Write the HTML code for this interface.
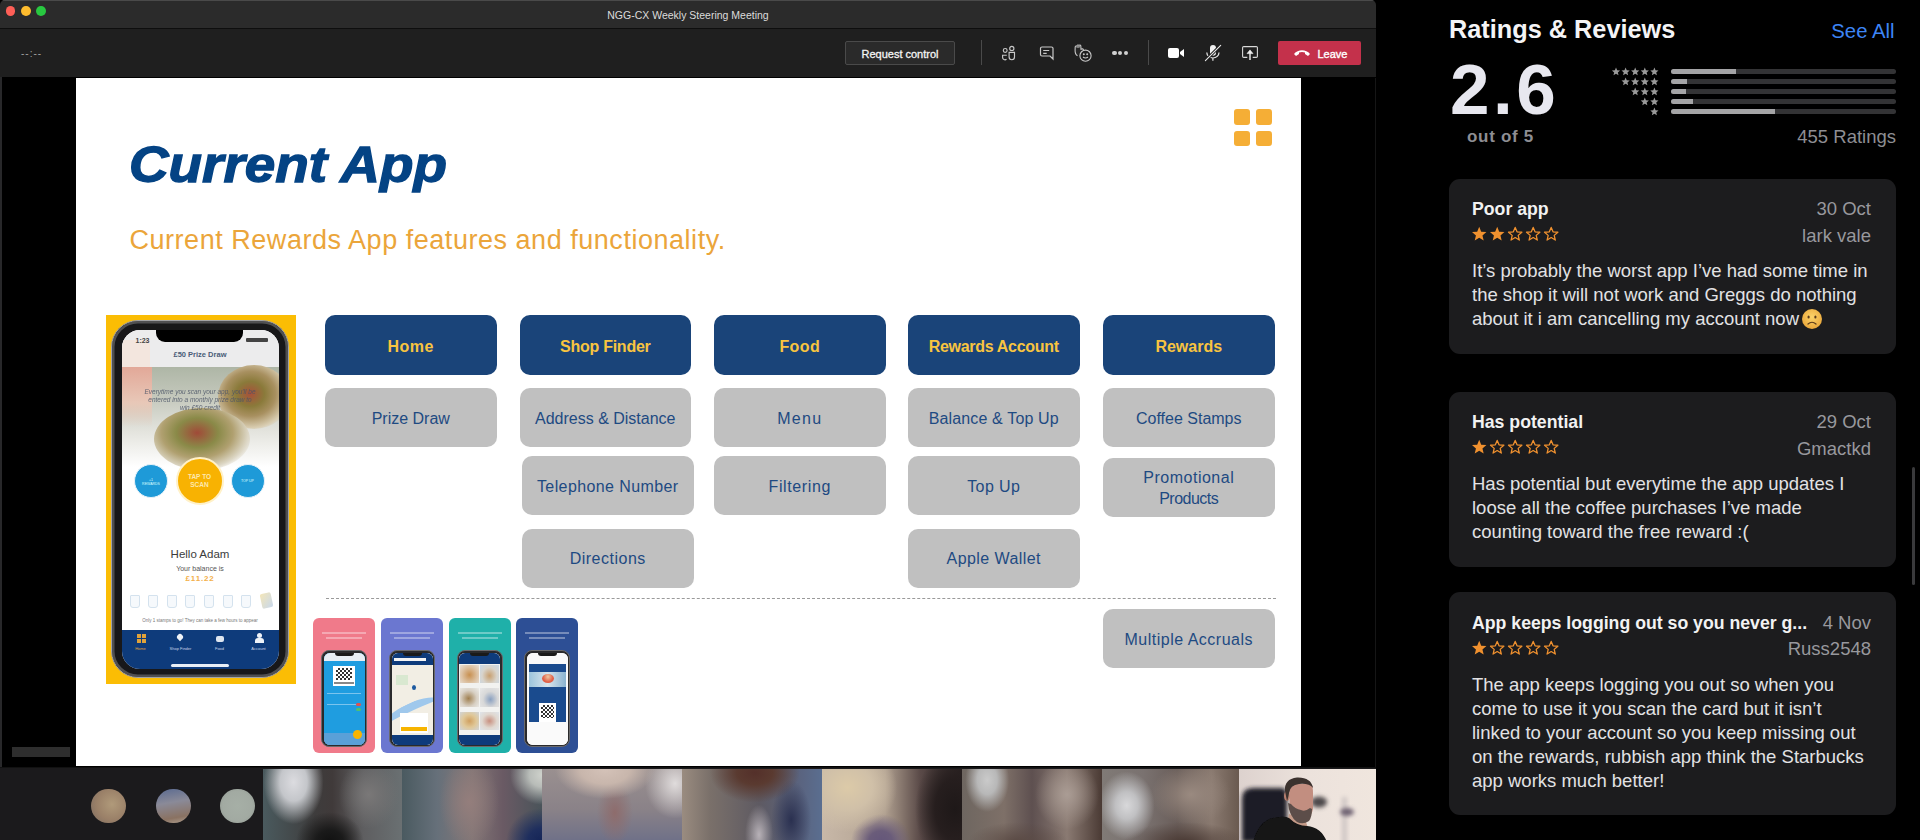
<!DOCTYPE html>
<html><head><meta charset="utf-8">
<style>
*{margin:0;padding:0;box-sizing:border-box}
html,body{width:1920px;height:840px;overflow:hidden;background:#000;font-family:"Liberation Sans",sans-serif}
.a{position:absolute}
#win{left:0;top:0;width:1376px;height:840px;background:#000;overflow:hidden;border-radius:5px 5px 0 0}
#titlebar{left:0;top:0;width:1376px;height:29px;background:#2b2b2b;border-top:1px solid #4a4a4a;border-bottom:1px solid #0e0e0e}
.tl{width:9.8px;height:9.8px;border-radius:50%;top:5.8px}
#title{left:0;top:8px;width:1376px;text-align:center;color:#dcdcdc;font-size:10.5px;line-height:14px}
#toolbar{left:0;top:29px;width:1376px;height:48px;background:#1f1f1f}
#slide{left:76px;top:78px;width:1225px;height:688px;background:#fff;overflow:hidden}
#strip{left:0;top:767px;width:1376px;height:73px;background:#1b1a1c;border-top:1px solid #111}
#right{left:1376px;top:0;width:544px;height:840px;background:#000}
.card{left:1449px;width:447px;background:#1c1c1e;border-radius:11px}
.btn{position:absolute;border-radius:10px;text-align:center;display:flex;align-items:center;justify-content:center;line-height:21px}
.pb{background:#1a4479;color:#f8c440;font-weight:bold;font-size:16px;height:59.5px;padding-top:4px}
.gb{background:#c0c0c0;color:#1e4a82;font-size:16px;height:59px;padding-top:1.5px}
.tbic{position:absolute}
</style></head>
<body>
<div id="win" class="a">
  <div id="titlebar" class="a"></div>
  <div class="a tl" style="left:5.5px;background:#fe5f57"></div>
  <div class="a tl" style="left:20.8px;background:#febc2e"></div>
  <div class="a tl" style="left:36.4px;background:#28c840"></div>
  <div id="title" class="a">NGG-CX Weekly Steering Meeting</div>
  <div id="toolbar" class="a">
    <div class="a" style="left:21px;top:18.5px;color:#a0a0a0;font-size:10px;letter-spacing:1px">--:--</div>
    <div class="a" style="left:845px;top:11.5px;width:110px;height:24.5px;background:#2a2a2a;border:1px solid #4a4a4a;border-radius:2px;color:#f4f4f4;font-size:11px;text-align:center;line-height:24px;-webkit-text-stroke:0.3px #f4f4f4">Request control</div>
    <div class="a" style="left:981px;top:11px;width:1px;height:25px;background:#4a4a4a"></div>
    <div class="a" style="left:1148px;top:11px;width:1px;height:25px;background:#4a4a4a"></div>
    <!-- people -->
    <svg class="a" style="left:1001px;top:16px" width="18" height="18" viewBox="0 0 18 18" fill="none" stroke="#c8c8c8" stroke-width="1.15">
      <circle cx="4.2" cy="5.4" r="1.9"/><circle cx="10.8" cy="3.4" r="2.1"/>
      <path d="M8.1 7.4 h5.4 v4.6 a2.7 2.7 0 0 1 -5.4 0 z"/><path d="M5.8 10.2 h-4.2 v2.2 a2.4 2.4 0 0 0 3.9 1.9"/>
    </svg>
    <!-- chat -->
    <svg class="a" style="left:1039px;top:17px" width="17" height="17" viewBox="0 0 17 17" fill="none" stroke="#c8c8c8" stroke-width="1.2">
      <path d="M3 1 h9.5 a1.5 1.5 0 0 1 1.5 1.5 v10.5 l-3 -3 h-8 a1.5 1.5 0 0 1 -1.5 -1.5 v-6 a1.5 1.5 0 0 1 1.5 -1.5z"/><path d="M4.2 4.5 h6 M4.2 7.3 h3.5"/>
    </svg>
    <!-- reactions -->
    <svg class="a" style="left:1073px;top:14px" width="20" height="20" viewBox="0 0 20 20" fill="none" stroke="#c8c8c8" stroke-width="1.1">
      <path d="M4.5 12.8 C2.8 11.8 2 9.5 2.1 7 L2.2 4 C2.3 3 3.6 2.8 3.9 3.8 L4.1 2.8 C4.4 1.8 5.7 1.9 5.9 2.9 L6.1 2.5 C6.5 1.6 7.7 1.9 7.8 2.9 L8 6.3 L9.2 5.9 C10 5.7 10.6 6.4 10.3 7.2" fill="#262626"/><ellipse cx="5" cy="3.6" rx="2.3" ry="1.4" fill="#888" stroke="none"/>
      <circle cx="12.5" cy="12.7" r="5.6" fill="#1f1f1f"/><path d="M10 14 q2.5 2 5 0"/><circle cx="10.8" cy="11.2" r="0.45"/><circle cx="14.2" cy="11.2" r="0.45"/>
    </svg>
    <!-- dots -->
    <div class="a" style="left:1112px;top:21.5px;width:4.5px;height:4.5px;border-radius:50%;background:#d0d0d0"></div>
    <div class="a" style="left:1117.8px;top:21.5px;width:4.5px;height:4.5px;border-radius:50%;background:#d0d0d0"></div>
    <div class="a" style="left:1123.6px;top:21.5px;width:4.5px;height:4.5px;border-radius:50%;background:#d0d0d0"></div>
    <!-- camera -->
    <svg class="a" style="left:1167px;top:17px" width="18" height="14" viewBox="0 0 18 14">
      <rect x="1" y="2" width="11" height="10" rx="2" fill="#fff"/><path d="M13 6 l4 -3 v8 l-4 -3z" fill="#fff"/>
    </svg>
    <!-- mic off -->
    <svg class="a" style="left:1203px;top:14px" width="20" height="20" viewBox="0 0 20 20" fill="none">
      <rect x="7" y="2" width="6" height="10.8" rx="3" fill="#f0f0f0"/>
      <path d="M3.8 9.4 a6.1 5.6 0 0 0 12.2 0 M9.9 15 v2.8" stroke="#e8e8e8" stroke-width="1.2"/>
      <path d="M2.4 17.6 L17.7 2.3" stroke="#1f1f1f" stroke-width="3"/>
      <path d="M2.4 17.6 L17.7 2.3" stroke="#e8e8e8" stroke-width="1.1" stroke-linecap="round"/>
    </svg>
    <!-- share -->
    <svg class="a" style="left:1241px;top:16px" width="18" height="17" viewBox="0 0 18 17" fill="none">
      <path d="M6.3 12.4 h-3.6 a1.1 1.1 0 0 1 -1.1 -1.1 v-8.6 a1.1 1.1 0 0 1 1.1 -1.1 h12.6 a1.1 1.1 0 0 1 1.1 1.1 v8.6 a1.1 1.1 0 0 1 -1.1 1.1 h-3.6" stroke="#d8d8d8" stroke-width="1.1"/>
      <path d="M9 7 v8" stroke="#f0f0f0" stroke-width="1.4"/>
      <path d="M6 8.6 L9 4.9 L12 8.6 Z" fill="#f0f0f0" stroke="#f0f0f0" stroke-width="0.6" stroke-linejoin="round"/>
    </svg>
    <!-- leave -->
    <div class="a" style="left:1278px;top:12px;width:83px;height:24px;background:#c4314b;border-radius:2px"></div>
    <svg class="a" style="left:1293px;top:19px" width="18" height="10" viewBox="0 0 18 10">
      <path d="M1 6 c4 -5 12 -5 16 0 l-2 2 l-3 -2 v-1.5 c-2 -0.8 -4 -0.8 -6 0 v1.5 l-3 2z" fill="#fff"/>
    </svg>
    <div class="a" style="left:1317.5px;top:17.5px;color:#fff;font-size:11px;line-height:14px;-webkit-text-stroke:0.35px #fff">Leave</div>
  </div>

  <div class="a" style="left:0;top:77px;width:2px;height:690px;background:#28282a"></div>
  <div id="slide" class="a">
    <!-- phone mockup -->
    <div class="a" style="left:30px;top:236.5px;width:190px;height:369px;background:#fbbd04"></div>
    <div class="a" style="left:34.5px;top:242px;width:178px;height:358px;border-radius:27px;background:#18181a;border:1.5px solid #a4a4a6;box-shadow:inset 0 0 0 2.5px #505052"></div>
    <div class="a" style="left:45.5px;top:251.5px;width:157px;height:339px;border-radius:18px;background:#fff;overflow:hidden">
      <div class="a" style="left:0;top:0;width:157px;height:38px;background:#ececed"></div>
      <div class="a" style="left:0;top:10px;width:28px;height:28px;background:#f3e6de"></div>
      <div class="a" style="left:14px;top:6px;font-size:7px;font-weight:bold;color:#444;line-height:9px">1:23</div>
      <div class="a" style="left:124px;top:8px;width:22px;height:4px;background:#444;border-radius:1px"></div>
      <div class="a" style="left:34.5px;top:0;width:87px;height:12.5px;background:#000;border-radius:0 0 9px 9px"></div>
      <div class="a" style="left:0;top:20px;width:157px;text-align:center;font-size:7.5px;font-weight:bold;color:#4a5c78;line-height:9px">£50 Prize Draw</div>
      <div class="a" style="left:0;top:37.5px;width:157px;height:100px;background:linear-gradient(180deg,#aeb6a6 0%,#c4c8bc 30%,#e4e4de 65%,#ffffff 100%)"></div>
      <div class="a" style="left:0;top:37.5px;width:30px;height:60px;background:linear-gradient(180deg,#e2a898,#e8c8b8 60%,rgba(240,230,220,0))"></div>
      <div class="a" style="left:96px;top:35px;width:72px;height:64px;border-radius:50%;background:radial-gradient(ellipse at 45% 45%,#a8503a 0%,#8a7a3a 25%,#a89060 45%,#d8ccb0 68%,rgba(220,215,205,0) 76%)"></div>
      <div class="a" style="left:32px;top:78px;width:96px;height:62px;border-radius:50%;background:radial-gradient(ellipse at 45% 40%,#a04a38 0%,#8a8a48 28%,#b0a070 48%,#dcd6c4 68%,rgba(230,228,220,0) 78%)"></div>
      <div class="a" style="left:2px;top:58px;width:153px;text-align:center;font-size:6.5px;font-style:italic;color:#4a5366;line-height:8px;opacity:.85">Everytime you scan your app, you'll be<br>entered into a monthly prize draw to<br>win £50 credit</div>
      <div class="a" style="left:12.5px;top:134.5px;width:34px;height:34px;border-radius:50%;background:#1e9ad8;border:1.5px solid #e6f1f9"></div>
      <div class="a" style="left:54px;top:127.5px;width:48px;height:48px;border-radius:50%;background:#f8b202;border:2px solid #fff1c8"></div>
      <div class="a" style="left:54px;top:143px;width:48px;text-align:center;font-size:6.5px;font-weight:bold;color:#fde8ae;line-height:8px">TAP TO<br>SCAN</div>
      <div class="a" style="left:109px;top:134.5px;width:34px;height:34px;border-radius:50%;background:#1e9ad8;border:1.5px solid #e6f1f9"></div>
      <div class="a" style="left:12.5px;top:148px;width:34px;text-align:center;font-size:3.5px;color:#dff;line-height:4px">+1<br>REWARDS</div>
      <div class="a" style="left:109px;top:149.5px;width:34px;text-align:center;font-size:3.5px;color:#dff;line-height:4px">TOP UP</div>
      <div class="a" style="left:0;top:217.5px;width:157px;text-align:center;font-size:11.5px;color:#3c3c3c;line-height:14px">Hello Adam</div>
      <div class="a" style="left:0;top:234px;width:157px;text-align:center;font-size:7px;color:#555;line-height:9px">Your balance is</div>
      <div class="a" style="left:0;top:244.5px;width:157px;text-align:center;font-size:8px;font-weight:bold;color:#f3b04a;line-height:9px;letter-spacing:0.8px">£11.22</div>
      <div class="a" style="left:8.0px;top:265px;width:10px;height:13px;border:1px solid #d4e2ee;border-radius:1px 1px 3px 3px;background:#f6f9fc"></div><div class="a" style="left:26.6px;top:265px;width:10px;height:13px;border:1px solid #d4e2ee;border-radius:1px 1px 3px 3px;background:#f6f9fc"></div><div class="a" style="left:45.2px;top:265px;width:10px;height:13px;border:1px solid #d4e2ee;border-radius:1px 1px 3px 3px;background:#f6f9fc"></div><div class="a" style="left:63.8px;top:265px;width:10px;height:13px;border:1px solid #d4e2ee;border-radius:1px 1px 3px 3px;background:#f6f9fc"></div><div class="a" style="left:82.4px;top:265px;width:10px;height:13px;border:1px solid #d4e2ee;border-radius:1px 1px 3px 3px;background:#f6f9fc"></div><div class="a" style="left:101.0px;top:265px;width:10px;height:13px;border:1px solid #d4e2ee;border-radius:1px 1px 3px 3px;background:#f6f9fc"></div><div class="a" style="left:119.6px;top:265px;width:10px;height:13px;border:1px solid #d4e2ee;border-radius:1px 1px 3px 3px;background:#f6f9fc"></div><div class="a" style="left:139px;top:263px;width:11px;height:15px;background:linear-gradient(135deg,#f4e6b8,#c8d8ec);border-radius:2px;transform:rotate(-12deg)"></div>
      <div class="a" style="left:0;top:288px;width:157px;text-align:center;font-size:4.5px;color:#777;line-height:6px;white-space:nowrap">Only 1 stamps to go! They can take a few hours to appear</div>
      <div class="a" style="left:0;top:300.5px;width:157px;height:39px;background:#0e3b7b"></div>
      <div class="a" style="left:15px;top:304px;width:4px;height:4px;background:#e0a23a"></div><div class="a" style="left:20px;top:304px;width:4px;height:4px;background:#e0a23a"></div>
      <div class="a" style="left:15px;top:309px;width:4px;height:4px;background:#e0a23a"></div><div class="a" style="left:20px;top:309px;width:4px;height:4px;background:#e0a23a"></div>
      <div class="a" style="left:55px;top:304px;width:6px;height:6px;background:#eef2f8;border-radius:50% 50% 50% 0;transform:rotate(-45deg)"></div>
      <div class="a" style="left:94px;top:306px;width:8px;height:6px;background:#dfe6f0;border-radius:2px"></div>
      <div class="a" style="left:135px;top:303px;width:5px;height:5px;background:#eef2f8;border-radius:50%"></div><div class="a" style="left:133px;top:308.5px;width:9px;height:4.5px;background:#eef2f8;border-radius:3px 3px 0 0"></div>
      <div class="a" style="left:4px;top:316px;width:30px;text-align:center;font-size:4px;color:#e0a23a;line-height:5px">Home</div>
      <div class="a" style="left:40px;top:316px;width:38px;text-align:center;font-size:4px;color:#c8d4e8;line-height:5px">Shop Finder</div>
      <div class="a" style="left:83px;top:316px;width:30px;text-align:center;font-size:4px;color:#c8d4e8;line-height:5px">Food</div>
      <div class="a" style="left:122px;top:316px;width:30px;text-align:center;font-size:4px;color:#c8d4e8;line-height:5px">Account</div>
      <div class="a" style="left:49.5px;top:334.5px;width:58px;height:2.5px;background:#e8eef6;border-radius:2px"></div>
    </div>

    <div class="a" style="left:237px;top:540px;width:62px;height:135px;border-radius:6px;background:#f07a8a;overflow:hidden">
      <div class="a" style="left:9px;top:14px;width:44px;height:1.5px;background:#ffffff;opacity:.35"></div>
      <div class="a" style="left:13px;top:19px;width:36px;height:1.5px;background:#ffffff;opacity:.35"></div>
      <div class="a" style="left:8px;top:32px;width:46px;height:97px;border-radius:8px;background:#2a2a2c;border:1px solid #6a6a6c"></div>
      <div class="a" style="left:10.5px;top:34.5px;width:41px;height:92px;border-radius:6px;overflow:hidden;background:#fff"><div class="a" style="left:0;top:0;width:41px;height:92px;background:#1f9de0"></div>
<div class="a" style="left:0;top:0;width:41px;height:8px;background:#e8eef4"></div>
<div class="a" style="left:9px;top:13px;width:22px;height:20px;background:#fff"></div>
<div class="a" style="left:12px;top:15px;width:16px;height:12px;background:repeating-conic-gradient(#333 0 25%,#fff 0 50%) 0 0/4px 4px"></div><div class="a" style="left:10px;top:29px;width:20px;height:2px;background:#888"></div>
<div class="a" style="left:3px;top:40px;width:34px;height:1px;background:#7ac4ee"></div>
<div class="a" style="left:3px;top:51px;width:34px;height:1px;background:#7ac4ee"></div>
<div class="a" style="left:32px;top:50px;width:5px;height:3px;background:#e05050;border-radius:2px"></div>
<div class="a" style="left:32px;top:55px;width:5px;height:3px;background:#50c070;border-radius:2px"></div>
<div class="a" style="left:0;top:80px;width:41px;height:12px;background:#5aa0d8"></div>
<div class="a" style="left:29px;top:77px;width:9px;height:9px;border-radius:50%;background:#f8b400"></div>
        <div class="a" style="left:11px;top:0;width:19px;height:3.5px;background:#1a1a1a;border-radius:0 0 3px 3px"></div>
      </div>
    </div>
    <div class="a" style="left:305px;top:540px;width:62px;height:135px;border-radius:6px;background:#6b77d0;overflow:hidden">
      <div class="a" style="left:9px;top:14px;width:44px;height:1.5px;background:#ffffff;opacity:.35"></div>
      <div class="a" style="left:13px;top:19px;width:36px;height:1.5px;background:#ffffff;opacity:.35"></div>
      <div class="a" style="left:8px;top:32px;width:46px;height:97px;border-radius:8px;background:#2a2a2c;border:1px solid #6a6a6c"></div>
      <div class="a" style="left:10.5px;top:34.5px;width:41px;height:92px;border-radius:6px;overflow:hidden;background:#fff"><div class="a" style="left:0;top:0;width:41px;height:92px;background:#f2eee4"></div>
<div class="a" style="left:0;top:0;width:41px;height:12px;background:#0e3b7b"></div>
<div class="a" style="left:2px;top:5px;width:32px;height:3px;background:#f4f4f4"></div>
<div class="a" style="left:-10px;top:50px;width:60px;height:20px;border-radius:50%;border-top:8px solid #9fc8ec;transform:rotate(-25deg)"></div>
<div class="a" style="left:4px;top:22px;width:12px;height:10px;background:#cfe6c8;opacity:.7"></div>
<div class="a" style="left:20px;top:32px;width:4px;height:5px;background:#1e5aa0;border-radius:50%"></div>
<div class="a" style="left:8px;top:60px;width:28px;height:20px;background:#fff"></div>
<div class="a" style="left:9px;top:74px;width:26px;height:4px;background:#f7b400"></div>
<div class="a" style="left:0;top:82px;width:41px;height:10px;background:#0e3b7b"></div>
        <div class="a" style="left:11px;top:0;width:19px;height:3.5px;background:#1a1a1a;border-radius:0 0 3px 3px"></div>
      </div>
    </div>
    <div class="a" style="left:372.5px;top:540px;width:62px;height:135px;border-radius:6px;background:#1fb0a9;overflow:hidden">
      <div class="a" style="left:9px;top:14px;width:44px;height:1.5px;background:#ffffff;opacity:.35"></div>
      <div class="a" style="left:13px;top:19px;width:36px;height:1.5px;background:#ffffff;opacity:.35"></div>
      <div class="a" style="left:8px;top:32px;width:46px;height:97px;border-radius:8px;background:#2a2a2c;border:1px solid #6a6a6c"></div>
      <div class="a" style="left:10.5px;top:34.5px;width:41px;height:92px;border-radius:6px;overflow:hidden;background:#fff"><div class="a" style="left:0;top:0;width:41px;height:92px;background:#f2f2f0"></div>
<div class="a" style="left:0;top:0;width:41px;height:11px;background:#0e3b7b"></div>
<div class="a" style="left:1px;top:12px;width:19px;height:18px;background:radial-gradient(ellipse at 50% 55%,#c89050 0%,#dcc0a0 55%,#e8e0d8 100%)"></div>
<div class="a" style="left:21px;top:12px;width:19px;height:18px;background:radial-gradient(ellipse at 50% 60%,#c8a070 0%,#d8d4cc 55%,#c8d8e8 100%)"></div>
<div class="a" style="left:1px;top:35px;width:19px;height:19px;background:radial-gradient(ellipse at 45% 55%,#a08050 0%,#d8d0c4 55%,#ececea 100%)"></div>
<div class="a" style="left:21px;top:35px;width:19px;height:19px;background:radial-gradient(ellipse at 55% 60%,#8aa0c0 0%,#d8d8d8 50%,#e8e8e8 100%)"></div>
<div class="a" style="left:1px;top:59px;width:19px;height:18px;background:radial-gradient(ellipse at 50% 50%,#d0a060 0%,#e0c898 50%,#d0d4d8 100%)"></div>
<div class="a" style="left:21px;top:59px;width:19px;height:18px;background:radial-gradient(ellipse at 50% 50%,#c89080 0%,#e0d8d0 55%,#dfe4ea 100%)"></div>
<div class="a" style="left:0;top:82px;width:41px;height:10px;background:#0e3b7b"></div>
        <div class="a" style="left:11px;top:0;width:19px;height:3.5px;background:#1a1a1a;border-radius:0 0 3px 3px"></div>
      </div>
    </div>
    <div class="a" style="left:440px;top:540px;width:62px;height:135px;border-radius:6px;background:#2d4f95;overflow:hidden">
      <div class="a" style="left:9px;top:14px;width:44px;height:1.5px;background:#ffffff;opacity:.35"></div>
      <div class="a" style="left:13px;top:19px;width:36px;height:1.5px;background:#ffffff;opacity:.35"></div>
      <div class="a" style="left:8px;top:32px;width:46px;height:97px;border-radius:8px;background:#2a2a2c;border:1px solid #6a6a6c"></div>
      <div class="a" style="left:10.5px;top:34.5px;width:41px;height:92px;border-radius:6px;overflow:hidden;background:#fff"><div class="a" style="left:0;top:0;width:41px;height:92px;background:#fafafa"></div>
<div class="a" style="left:2px;top:11px;width:37px;height:58px;background:#1a4b8e"></div>
<div class="a" style="left:2px;top:19px;width:37px;height:15px;background:linear-gradient(90deg,#9cc4dc,#d8e4ec,#8ab4d0)"></div>
<div class="a" style="left:15px;top:21px;width:12px;height:9px;border-radius:50%;background:radial-gradient(ellipse at 50% 30%,#f0c8a0 0%,#e06048 60%)"></div>
<div class="a" style="left:12px;top:50px;width:17px;height:19px;background:#fff"></div>
<div class="a" style="left:14px;top:52px;width:13px;height:13px;background:repeating-conic-gradient(#333 0 25%,#fff 0 50%) 0 0/4px 4px"></div>
        <div class="a" style="left:11px;top:0;width:19px;height:3.5px;background:#1a1a1a;border-radius:0 0 3px 3px"></div>
      </div>
    </div>
    <div class="a" style="left:1158px;top:31px;width:15.5px;height:15.5px;border-radius:3px;background:#f5ae36"></div>
    <div class="a" style="left:1180px;top:31px;width:15.5px;height:15.5px;border-radius:3px;background:#f5ae36"></div>
    <div class="a" style="left:1158px;top:52.5px;width:15.5px;height:15.5px;border-radius:3px;background:#f5ae36"></div>
    <div class="a" style="left:1180px;top:52.5px;width:15.5px;height:15.5px;border-radius:3px;background:#f5ae36"></div>
    <div class="a" id="ttl" style="left:52.5px;top:57px;line-height:60px;font-size:50px;font-weight:bold;font-style:italic;color:#044384;white-space:nowrap;transform-origin:0 0;transform:scaleX(1.097);-webkit-text-stroke:1.3px #044384">Current App</div>
    <div class="a" id="sub" style="left:53.5px;top:147.2px;line-height:30px;font-size:27px;color:#eba53a;white-space:nowrap;letter-spacing:0.53px">Current Rewards App features and functionality.</div>

    <div class="btn pb" style="letter-spacing:0.5px;left:249px;top:237px;width:171.5px">Home</div>
    <div class="btn pb" style="letter-spacing:-0.25px;left:443.5px;top:237px;width:171.5px">Shop Finder</div>
    <div class="btn pb" style="letter-spacing:0.4px;left:638px;top:237px;width:171.5px">Food</div>
    <div class="btn pb" style="letter-spacing:-0.3px;left:832px;top:237px;width:171.5px">Rewards Account</div>
    <div class="btn pb" style="left:1027px;top:237px;width:171.5px">Rewards</div>

    <div class="btn gb" style="left:249px;top:310px;width:171.5px">Prize Draw</div>
    <div class="btn gb" style="left:443.5px;top:310px;width:171.5px">Address &amp; Distance</div>
    <div class="btn gb" style="letter-spacing:1.3px;left:638px;top:310px;width:171.5px">Menu</div>
    <div class="btn gb" style="letter-spacing:0.15px;left:832px;top:310px;width:171.5px">Balance &amp; Top Up</div>
    <div class="btn gb" style="left:1027px;top:310px;width:171.5px">Coffee Stamps</div>

    <div class="btn gb" style="letter-spacing:0.4px;left:446px;top:378px;width:171.5px">Telephone Number</div>
    <div class="btn gb" style="letter-spacing:0.6px;left:638px;top:378px;width:171.5px">Filtering</div>
    <div class="btn gb" style="letter-spacing:0.4px;left:832px;top:378px;width:171.5px">Top Up</div>
    <div class="btn gb" style="left:1027px;top:379.5px;width:171.5px;line-height:21.1px;padding-top:2px"><div><span style="letter-spacing:0.5px">Promotional</span><br><span style="letter-spacing:-0.5px">Products</span></div></div>

    <div class="btn gb" style="letter-spacing:0.5px;left:446px;top:450.5px;width:171.5px">Directions</div>
    <div class="btn gb" style="letter-spacing:0.43px;left:832px;top:450.5px;width:171.5px">Apple Wallet</div>

    <div class="a" style="left:250px;top:520px;width:950px;height:0;border-top:1px dashed #9a9a9a"></div>
    <div class="btn gb" style="letter-spacing:0.5px;left:1027px;top:531px;width:171.5px">Multiple Accruals</div>
  </div>

  <div class="a" style="left:12px;top:747px;width:58px;height:10px;background:#2e2e2e;filter:blur(0.5px)"></div>
  <div class="a" style="left:1375px;top:78px;width:1px;height:689px;background:#161616"></div>
  <div id="strip" class="a">
    <div class="a" style="left:0;top:0;width:76px;height:0"></div>
    <div class="a" style="left:91.4px;top:20.6px;width:34.8px;height:34.8px;border-radius:50%;background:radial-gradient(circle at 60% 45%,#b09a7a 0%,#9a8068 55%,#7a6a60 100%)"></div>
    <div class="a" style="left:156.4px;top:20.6px;width:34.8px;height:34.8px;border-radius:50%;background:linear-gradient(170deg,#5a6a90 0%,#8a8a98 40%,#8a7262 80%,#b0a090 100%)"></div>
    <div class="a" style="left:220.2px;top:20.6px;width:34.8px;height:34.8px;border-radius:50%;background:radial-gradient(circle at 50% 50%,#a6afa6 0%,#a2aaa2 60%,#8a928a 100%)"></div>
    <div class="a" style="left:263px;top:1px;width:139px;height:73px;background:radial-gradient(ellipse 30px 42px at 22% 18%,#dcdce0 0%,#c4c6ca 45%,rgba(150,155,160,0) 100%),radial-gradient(ellipse 34px 30px at 48% 100%,#111 0%,#1a1a1a 40%,rgba(20,20,20,0) 100%),radial-gradient(ellipse 30px 34px at 76% 35%,#7a7878 0%,rgba(110,108,108,0) 100%),linear-gradient(90deg,#4a5a5e 0%,#3e3c3c 38%,#403a3a 50%,#5e5e60 72%,#6a7072 100%)"></div>
    <div class="a" style="left:402px;top:1px;width:140px;height:73px;background:radial-gradient(ellipse 32px 30px at 100% 8%,#cfd2cc 0%,#b8bcb8 40%,rgba(160,165,160,0) 100%),radial-gradient(ellipse 36px 34px at 100% 100%,#142456 0%,#1e2e5e 40%,rgba(40,50,90,0) 100%),radial-gradient(ellipse 30px 45px at 48% 45%,#947e7c 0%,rgba(140,120,118,0) 100%),linear-gradient(90deg,#4a5a60 0%,#66707a 25%,#827676 50%,#6a5a64 72%,#4a545a 100%)"></div>
    <div class="a" style="left:542px;top:1px;width:140px;height:73px;background:radial-gradient(ellipse 50px 30px at 45% 0%,#d4c2b8 0%,#c8b6ac 50%,rgba(190,175,168,0) 100%),radial-gradient(ellipse 30px 35px at 95% 20%,#e0dcdc 0%,rgba(215,210,210,0) 100%),radial-gradient(ellipse 18px 32px at 52% 60%,#8e6c6c 0%,rgba(140,110,110,0) 100%),linear-gradient(180deg,#9a9090 0%,#8a8288 55%,#6e7088 100%),linear-gradient(90deg,#5a6670,rgba(90,102,112,0))"></div>
    <div class="a" style="left:682px;top:1px;width:140px;height:73px;background:radial-gradient(ellipse 45px 30px at 52% 5%,#54302a 0%,#5a3a30 40%,rgba(90,60,50,0) 100%),radial-gradient(ellipse 14px 30px at 55% 90%,#b8b2b8 0%,rgba(180,175,180,0) 100%),radial-gradient(ellipse 20px 40px at 78% 70%,#2a3050 0%,rgba(40,45,80,0) 100%),linear-gradient(90deg,#9a8c80 0%,#7a706a 20%,#5e5a62 55%,#5a6480 85%,#5a6e90 100%)"></div>
    <div class="a" style="left:822px;top:1px;width:140px;height:73px;background:radial-gradient(ellipse 50px 45px at 18% 25%,#dccaa8 0%,#d0c0a8 50%,rgba(200,185,165,0) 100%),radial-gradient(ellipse 30px 28px at 42% 100%,#64567a 0%,#6a5c7a 40%,rgba(100,90,120,0) 100%),radial-gradient(ellipse 40px 60px at 95% 55%,#1e1818 0%,#261e1e 50%,rgba(40,30,30,0) 100%),linear-gradient(90deg,#c8b8a8 0%,#b0a090 45%,#5a4a48 70%,#2a2222 100%)"></div>
    <div class="a" style="left:962px;top:1px;width:140px;height:73px;background:radial-gradient(ellipse 22px 32px at 18% 15%,#cacaca 0%,#b8b8b8 45%,rgba(170,170,170,0) 100%),radial-gradient(ellipse 32px 35px at 75% 35%,#aa9c94 0%,rgba(160,145,138,0) 100%),radial-gradient(ellipse 50px 20px at 40% 100%,#5a4a44 0%,rgba(80,70,65,0) 100%),linear-gradient(90deg,#6e6660 0%,#7e7068 30%,#5e5050 50%,#8a7a72 75%,#4a3a34 100%)"></div>
    <div class="a" style="left:1102px;top:1px;width:137px;height:73px;background:radial-gradient(ellipse 28px 34px at 18% 50%,#d8d8da 0%,#c0c0c2 40%,rgba(160,160,160,0) 100%),radial-gradient(ellipse 40px 30px at 65% 35%,#9a8a80 0%,rgba(150,135,125,0) 100%),radial-gradient(ellipse 60px 20px at 60% 100%,#4a3a34 0%,rgba(70,55,50,0) 100%),linear-gradient(90deg,#807a76 0%,#7a7270 30%,#6a5e5a 55%,#8a7a70 80%,#6a5a50 100%)"></div>
    <svg class="a" style="left:1239px;top:1px" width="137" height="73" viewBox="0 0 137 73">
      <defs>
        <filter id="b2" x="-50%" y="-50%" width="200%" height="200%"><feGaussianBlur stdDeviation="2"/></filter>
        <filter id="b1" x="-50%" y="-50%" width="200%" height="200%"><feGaussianBlur stdDeviation="0.7"/></filter>
        <linearGradient id="pbg" x1="0" y1="0" x2="1" y2="0"><stop offset="0" stop-color="#ddd2ce"/><stop offset="0.5" stop-color="#ece2dc"/><stop offset="1" stop-color="#f0e6de"/></linearGradient>
      </defs>
      <rect width="137" height="73" fill="url(#pbg)"/>
      <rect x="103" y="28" width="5" height="50" fill="#cfc6c4" filter="url(#b2)"/>
      <ellipse cx="80" cy="33" rx="8" ry="5.5" fill="#4e484c" filter="url(#b2)"/>
      <ellipse cx="108" cy="43" rx="7" ry="4" fill="#6e6272" filter="url(#b2)"/>
      <path d="M3 73 V30 Q3 19 15 19 H44 Q48 20 48 28 V73 Z" fill="#1d1d26" filter="url(#b2)"/>
      <g filter="url(#b1)">
        <path d="M47 62 L50 45 L66 50 L70 62 Z" fill="#c49a88"/>
        <ellipse cx="48" cy="27" rx="3" ry="5" fill="#b88070"/>
        <path d="M50 18 Q50 15 56 15 H72 Q74 17 74 24 V40 Q73 47 66 49 Q56 50 51 43 Z" fill="#c28e80"/>
        <path d="M49 34 Q50 47 58 53 Q64 56 70 52 Q73 48 73 40 L71 39 Q66 43 62 41 Q56 40 52 35 Z" fill="#5c4e48"/>
        <path d="M46 22 Q45 10 58 8.5 Q72 8 74 19 Q70 14 60 15 Q51 16 50 24 Q49 30 48 32 Z" fill="#3a302e"/>
        <path d="M14 73 Q18 56 30 50 Q44 46 50 49 Q58 57 68 57 Q82 58 88 73 Z" fill="#121212"/>
      </g>
    </svg>
  </div>
</div>

<div id="right" class="a"></div>
  <div class="a" style="left:1449px;top:14.2px;line-height:30px;font-size:25.3px;font-weight:bold;color:#f4f4f6;white-space:nowrap">Ratings &amp; Reviews</div>
  <div class="a" style="right:25.5px;top:16px;line-height:30px;font-size:20.3px;color:#3d85f5;white-space:nowrap">See All</div>
  <div class="a" style="left:1450px;top:50.4px;line-height:80px;font-size:71px;font-weight:bold;color:#e7e7ef;white-space:nowrap;letter-spacing:3.5px">2.6</div>
  <div class="a" style="left:1467px;top:127px;line-height:20px;font-size:17px;font-weight:bold;color:#8e8e93;white-space:nowrap;letter-spacing:0.7px">out of 5</div>
  <svg class="a" style="left:1605px;top:62px" width="60" height="56" viewBox="0 0 60 56"><polygon points="49.40,5.50 50.54,8.23 53.49,8.47 51.24,10.40 51.93,13.28 49.40,11.74 46.87,13.28 47.56,10.40 45.31,8.47 48.26,8.23" fill="#9a9a9a"/><polygon points="39.80,5.50 40.94,8.23 43.89,8.47 41.64,10.40 42.33,13.28 39.80,11.74 37.27,13.28 37.96,10.40 35.71,8.47 38.66,8.23" fill="#9a9a9a"/><polygon points="30.20,5.50 31.34,8.23 34.29,8.47 32.04,10.40 32.73,13.28 30.20,11.74 27.67,13.28 28.36,10.40 26.11,8.47 29.06,8.23" fill="#9a9a9a"/><polygon points="20.60,5.50 21.74,8.23 24.69,8.47 22.44,10.40 23.13,13.28 20.60,11.74 18.07,13.28 18.76,10.40 16.51,8.47 19.46,8.23" fill="#9a9a9a"/><polygon points="11.00,5.50 12.14,8.23 15.09,8.47 12.84,10.40 13.53,13.28 11.00,11.74 8.47,13.28 9.16,10.40 6.91,8.47 9.86,8.23" fill="#9a9a9a"/><polygon points="49.40,15.50 50.54,18.23 53.49,18.47 51.24,20.40 51.93,23.28 49.40,21.73 46.87,23.28 47.56,20.40 45.31,18.47 48.26,18.23" fill="#9a9a9a"/><polygon points="39.80,15.50 40.94,18.23 43.89,18.47 41.64,20.40 42.33,23.28 39.80,21.73 37.27,23.28 37.96,20.40 35.71,18.47 38.66,18.23" fill="#9a9a9a"/><polygon points="30.20,15.50 31.34,18.23 34.29,18.47 32.04,20.40 32.73,23.28 30.20,21.73 27.67,23.28 28.36,20.40 26.11,18.47 29.06,18.23" fill="#9a9a9a"/><polygon points="20.60,15.50 21.74,18.23 24.69,18.47 22.44,20.40 23.13,23.28 20.60,21.73 18.07,23.28 18.76,20.40 16.51,18.47 19.46,18.23" fill="#9a9a9a"/><polygon points="49.40,25.50 50.54,28.23 53.49,28.47 51.24,30.40 51.93,33.28 49.40,31.73 46.87,33.28 47.56,30.40 45.31,28.47 48.26,28.23" fill="#9a9a9a"/><polygon points="39.80,25.50 40.94,28.23 43.89,28.47 41.64,30.40 42.33,33.28 39.80,31.73 37.27,33.28 37.96,30.40 35.71,28.47 38.66,28.23" fill="#9a9a9a"/><polygon points="30.20,25.50 31.34,28.23 34.29,28.47 32.04,30.40 32.73,33.28 30.20,31.73 27.67,33.28 28.36,30.40 26.11,28.47 29.06,28.23" fill="#9a9a9a"/><polygon points="49.40,35.50 50.54,38.23 53.49,38.47 51.24,40.40 51.93,43.28 49.40,41.73 46.87,43.28 47.56,40.40 45.31,38.47 48.26,38.23" fill="#9a9a9a"/><polygon points="39.80,35.50 40.94,38.23 43.89,38.47 41.64,40.40 42.33,43.28 39.80,41.73 37.27,43.28 37.96,40.40 35.71,38.47 38.66,38.23" fill="#9a9a9a"/><polygon points="49.40,45.50 50.54,48.23 53.49,48.47 51.24,50.40 51.93,53.28 49.40,51.73 46.87,53.28 47.56,50.40 45.31,48.47 48.26,48.23" fill="#9a9a9a"/></svg>
  <div class="a" style="left:1670.5px;top:68.9px;width:225px;height:5px;border-radius:2.5px;background:#333335"></div><div class="a" style="left:1670.5px;top:68.9px;width:65.5px;height:5px;border-radius:2.5px 0 0 2.5px;background:#a4a4a6"></div><div class="a" style="left:1670.5px;top:78.9px;width:225px;height:5px;border-radius:2.5px;background:#333335"></div><div class="a" style="left:1670.5px;top:78.9px;width:16.5px;height:5px;border-radius:2.5px 0 0 2.5px;background:#a4a4a6"></div><div class="a" style="left:1670.5px;top:88.9px;width:225px;height:5px;border-radius:2.5px;background:#333335"></div><div class="a" style="left:1670.5px;top:88.9px;width:15.5px;height:5px;border-radius:2.5px 0 0 2.5px;background:#a4a4a6"></div><div class="a" style="left:1670.5px;top:98.9px;width:225px;height:5px;border-radius:2.5px;background:#333335"></div><div class="a" style="left:1670.5px;top:98.9px;width:22.5px;height:5px;border-radius:2.5px 0 0 2.5px;background:#a4a4a6"></div><div class="a" style="left:1670.5px;top:108.9px;width:225px;height:5px;border-radius:2.5px;background:#333335"></div><div class="a" style="left:1670.5px;top:108.9px;width:104.5px;height:5px;border-radius:2.5px 0 0 2.5px;background:#a4a4a6"></div>
  <div class="a" style="right:24px;top:126.6px;line-height:20px;font-size:18.5px;color:#8e8e93;white-space:nowrap">455 Ratings</div>
  <div class="a card" style="top:179px;height:175px"></div><div class="a" style="left:1472px;top:198.4px;line-height:22px;font-size:17.7px;font-weight:bold;color:#f2f2f2;white-space:nowrap">Poor app</div><div class="a" style="right:49px;top:198.1px;line-height:22px;font-size:18.5px;color:#98989d;white-space:nowrap">30 Oct</div><svg class="a" style="left:1472px;top:225.3px" width="92" height="18" viewBox="0 0 92 18"><polygon points="7.20,1.80 9.21,6.63 14.43,7.05 10.45,10.46 11.67,15.55 7.20,12.82 2.73,15.55 3.95,10.46 -0.03,7.05 5.19,6.63" fill="#f0912f"/><polygon points="25.20,1.80 27.21,6.63 32.43,7.05 28.45,10.46 29.67,15.55 25.20,12.82 20.73,15.55 21.95,10.46 17.97,7.05 23.19,6.63" fill="#f0912f"/><polygon points="43.20,2.40 45.05,6.85 49.86,7.24 46.20,10.37 47.31,15.06 43.20,12.55 39.09,15.06 40.20,10.37 36.54,7.24 41.35,6.85" fill="none" stroke="#f0912f" stroke-width="1.3" stroke-linejoin="round"/><polygon points="61.20,2.40 63.05,6.85 67.86,7.24 64.20,10.37 65.31,15.06 61.20,12.55 57.09,15.06 58.20,10.37 54.54,7.24 59.35,6.85" fill="none" stroke="#f0912f" stroke-width="1.3" stroke-linejoin="round"/><polygon points="79.20,2.40 81.05,6.85 85.86,7.24 82.20,10.37 83.31,15.06 79.20,12.55 75.09,15.06 76.20,10.37 72.54,7.24 77.35,6.85" fill="none" stroke="#f0912f" stroke-width="1.3" stroke-linejoin="round"/></svg><div class="a" style="right:49px;top:224.6px;line-height:22px;font-size:18.5px;color:#98989d;white-space:nowrap">lark vale</div><div class="a" style="left:1472px;top:259.4px;line-height:24px;font-size:18.5px;color:#e2e2e4;white-space:nowrap">It’s probably the worst app I’ve had some time in<br>the shop it will not work and Greggs do nothing<br>about it i am cancelling my account now</div>
  <div class="a card" style="top:392px;height:175px"></div><div class="a" style="left:1472px;top:411.4px;line-height:22px;font-size:17.7px;font-weight:bold;color:#f2f2f2;white-space:nowrap">Has potential</div><div class="a" style="right:49px;top:411.1px;line-height:22px;font-size:18.5px;color:#98989d;white-space:nowrap">29 Oct</div><svg class="a" style="left:1472px;top:438.3px" width="92" height="18" viewBox="0 0 92 18"><polygon points="7.20,1.80 9.21,6.63 14.43,7.05 10.45,10.46 11.67,15.55 7.20,12.82 2.73,15.55 3.95,10.46 -0.03,7.05 5.19,6.63" fill="#f0912f"/><polygon points="25.20,2.40 27.05,6.85 31.86,7.24 28.20,10.37 29.31,15.06 25.20,12.55 21.09,15.06 22.20,10.37 18.54,7.24 23.35,6.85" fill="none" stroke="#f0912f" stroke-width="1.3" stroke-linejoin="round"/><polygon points="43.20,2.40 45.05,6.85 49.86,7.24 46.20,10.37 47.31,15.06 43.20,12.55 39.09,15.06 40.20,10.37 36.54,7.24 41.35,6.85" fill="none" stroke="#f0912f" stroke-width="1.3" stroke-linejoin="round"/><polygon points="61.20,2.40 63.05,6.85 67.86,7.24 64.20,10.37 65.31,15.06 61.20,12.55 57.09,15.06 58.20,10.37 54.54,7.24 59.35,6.85" fill="none" stroke="#f0912f" stroke-width="1.3" stroke-linejoin="round"/><polygon points="79.20,2.40 81.05,6.85 85.86,7.24 82.20,10.37 83.31,15.06 79.20,12.55 75.09,15.06 76.20,10.37 72.54,7.24 77.35,6.85" fill="none" stroke="#f0912f" stroke-width="1.3" stroke-linejoin="round"/></svg><div class="a" style="right:49px;top:437.6px;line-height:22px;font-size:18.5px;color:#98989d;white-space:nowrap">Gmactkd</div><div class="a" style="left:1472px;top:472.4px;line-height:24px;font-size:18.5px;color:#e2e2e4;white-space:nowrap">Has potential but everytime the app updates I<br>loose all the coffee purchases I’ve made<br>counting toward the free reward :(</div>
  <div class="a card" style="top:592.4px;height:223px"></div><div class="a" style="left:1472px;top:611.8px;line-height:22px;font-size:17.7px;font-weight:bold;color:#f2f2f2;white-space:nowrap">App keeps logging out so you never g...</div><div class="a" style="right:49px;top:611.5px;line-height:22px;font-size:18.5px;color:#98989d;white-space:nowrap">4 Nov</div><svg class="a" style="left:1472px;top:638.7px" width="92" height="18" viewBox="0 0 92 18"><polygon points="7.20,1.80 9.21,6.63 14.43,7.05 10.45,10.46 11.67,15.55 7.20,12.82 2.73,15.55 3.95,10.46 -0.03,7.05 5.19,6.63" fill="#f0912f"/><polygon points="25.20,2.40 27.05,6.85 31.86,7.24 28.20,10.37 29.31,15.06 25.20,12.55 21.09,15.06 22.20,10.37 18.54,7.24 23.35,6.85" fill="none" stroke="#f0912f" stroke-width="1.3" stroke-linejoin="round"/><polygon points="43.20,2.40 45.05,6.85 49.86,7.24 46.20,10.37 47.31,15.06 43.20,12.55 39.09,15.06 40.20,10.37 36.54,7.24 41.35,6.85" fill="none" stroke="#f0912f" stroke-width="1.3" stroke-linejoin="round"/><polygon points="61.20,2.40 63.05,6.85 67.86,7.24 64.20,10.37 65.31,15.06 61.20,12.55 57.09,15.06 58.20,10.37 54.54,7.24 59.35,6.85" fill="none" stroke="#f0912f" stroke-width="1.3" stroke-linejoin="round"/><polygon points="79.20,2.40 81.05,6.85 85.86,7.24 82.20,10.37 83.31,15.06 79.20,12.55 75.09,15.06 76.20,10.37 72.54,7.24 77.35,6.85" fill="none" stroke="#f0912f" stroke-width="1.3" stroke-linejoin="round"/></svg><div class="a" style="right:49px;top:638.0px;line-height:22px;font-size:18.5px;color:#98989d;white-space:nowrap">Russ2548</div><div class="a" style="left:1472px;top:672.8px;line-height:24px;font-size:18.5px;color:#e2e2e4;white-space:nowrap">The app keeps logging you out so when you<br>come to use it you scan the card but it isn’t<br>linked to your account so you keep missing out<br>on the rewards, rubbish app think the Starbucks<br>app works much better!</div>
  <svg class="a" style="left:1801px;top:308px" width="22" height="22" viewBox="0 0 22 22">
  <defs><radialGradient id="eg" cx="50%" cy="40%" r="60%"><stop offset="0" stop-color="#fbd36a"/><stop offset="1" stop-color="#e9a63a"/></radialGradient></defs>
  <circle cx="11" cy="11" r="10" fill="url(#eg)"/>
  <ellipse cx="7.6" cy="9" rx="1.1" ry="1.5" fill="#5a3a1a"/><ellipse cx="14.4" cy="9" rx="1.1" ry="1.5" fill="#5a3a1a"/>
  <path d="M7 16 q4 -3.5 8 0" stroke="#5a3a1a" stroke-width="1.2" fill="none" stroke-linecap="round"/>
</svg>
  <div class="a" style="left:1912px;top:467px;width:3px;height:118px;border-radius:1.5px;background:#3a3a3c"></div>

</body></html>
